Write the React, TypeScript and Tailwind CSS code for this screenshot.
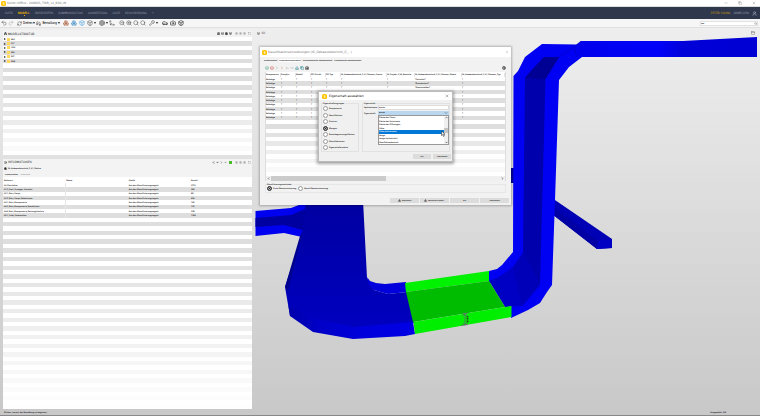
import { useState } from 'react';
import type { ReactNode } from 'react';
import {
  Aperture, Box, Boxes, Building2, Camera, Car, ChevronDown, ChevronLeft, ChevronRight, ChevronUp,
  Copy, Download, Footprints, Info, Layers, Minus, Move3d, Network, PanelTop, Redo2, RefreshCw, Search,
  Settings, Square, Undo2, UserRound, Wrench, X, ZoomIn, ZoomOut,
} from 'lucide-react';

/* ================= Data ================= */
const menu = ['DATEI', 'MODELL', 'ÜBERPRÜFEN', 'KOMMUNIKATION', 'AUSWERTUNG', 'CODE', 'BESCHREIBUNG', '+'];

const models = ['ARC', 'ELT', 'HZG', 'KÄL', 'RLT', 'SAN'];

const classes: [string, string][] = [
  ['00_Platzhalter', '2723'],
  ['01.2_Start_Erzeuger_Verteiler', '284'],
  ['02.1_Netz_Haupt', '88'],
  ['03.2_Netz_Haupt_Kabeltrasse', '656'],
  ['04.1_Netz_Komponente', '165'],
  ['04.2_Netz_Komponente_Brandschott', '125'],
  ['04.4_Netz_Komponente_Rettungsleuchte', '228'],
  ['05.1_Ende_Verbraucher', '1366'],
];

const ruleColumns = [
  { label: 'Komponente', width: 'w-[15px]' },
  { label: 'Disziplin', width: 'w-[15px]' },
  { label: 'Modell', width: 'w-[15px]' },
  { label: 'IFC-Entität', width: 'w-[15px]' },
  { label: 'IFC-Typ', width: 'w-[15px]' },
  { label: 'IG_Gebaeudetechnik_E_01_Element_Status', width: 'w-[46px]' },
  { label: 'IG_Projekt_E_06_Bauteile', width: 'w-[28px]' },
  { label: 'IG_Gebaeudetechnik_E_01_Element_Name', width: 'w-[47px]' },
  { label: 'IG_Gebaeudetechnik_F_01_Element_Typ', width: 'flex-1' },
];

const ruleNames = ['*Verteiler*', '*Brandschott*', '*Rauchmelder*'];

const groups = [
  'Komponente', 'Identifikation', 'Position', 'Mengen',
  'Raumbegrenzungsflächen', 'Klassifikationen', 'Eigenschaftensätze',
];

const properties = [
  'Fläche der Türen', 'Fläche der Unterseite', 'Fläche der Öffnungen', 'Höhe',
  'Höhe (einheitslos)', 'Länge', 'Länge (einheitslos)', 'Oberflächenbereich',
];

// stripes get lighter towards the end of a long list
function stripe(i: number, total: number) {
  if (i % 2 === 0) return '#ffffff';
  const start = Math.min(13, total / 2);
  const t = Math.max(0, (i - start) / (total - start));
  const v = Math.round(222 + 33 * t);
  return `rgb(${v},${v},${v})`;
}

const range = (n: number) => Array.from({ length: n }, (_, i) => i);

/* ================= Small parts ================= */
function Logo() {
  return (
    <svg className="size-[5px] shrink-0" viewBox="0 0 10 10" aria-hidden>
      <rect width="10" height="10" rx="3" fill="#ffc400" />
      <path d="M6.500 3.200 4 3.200v1.700h2.400v2H3.600" fill="none" stroke="#fff" strokeWidth="1.1" />
    </svg>
  );
}

function Tool({ label, children }: { label: string; children: ReactNode }) {
  return (
    <button aria-label={label} className="flex size-[6px] shrink-0 items-center justify-center text-[#4a4a4a] [&>svg]:size-[6px]">
      {children}
    </button>
  );
}

function Caret() {
  return (
    <svg className="h-[2px] w-[2px] shrink-0" viewBox="0 0 4 4" aria-hidden>
      <path d="M0 0h4L2 4z" fill="#222" />
    </svg>
  );
}

function PanelTools() {
  return (
    <div className="flex items-center gap-px text-[#777] [&>svg]:size-[3px]">
      <Settings />
      <Settings />
      <Settings />
      <Square className="ml-px" />
    </div>
  );
}

function PushButton({ children, className }: { children: ReactNode; className: string }) {
  return (
    <button className={`flex h-[5px] items-center justify-center gap-px bg-[#dcdcdc] text-[2px] leading-[3px] font-semibold text-[#111] ${className}`}>
      {children}
    </button>
  );
}

const radioClass =
  'size-[5px] shrink-0 appearance-none rounded-full border border-[#999] bg-white checked:border-[#444] checked:bg-black checked:shadow-[inset_0_0_0_1px_#bbb]';

/* ================= 3D view ================= */
function Scene() {
  return (
    <svg className="block h-full w-full" viewBox="253 28 507 381" preserveAspectRatio="xMinYMin slice" aria-label="3D">
      <defs>
        <linearGradient id="duct" x1="0" x2="1" y1="0" y2="0">
          <stop offset="0" stopColor="#0000ec" />
          <stop offset="0.45" stopColor="#0000fa" />
          <stop offset="0.6" stopColor="#0000d8" />
          <stop offset="1" stopColor="#0000d4" />
        </linearGradient>
        <linearGradient id="floor" x1="0" x2="0" y1="0" y2="1">
          <stop offset="0" stopColor="#0000a0" />
          <stop offset="1" stopColor="#0000c0" />
        </linearGradient>
        <linearGradient id="rim" x1="0" x2="1" y1="0" y2="0">
          <stop offset="0" stopColor="#0000ac" />
          <stop offset="0.25" stopColor="#0000c8" />
          <stop offset="0.6" stopColor="#0000dc" />
          <stop offset="1" stopColor="#0000e6" />
        </linearGradient>
      </defs>

      {/* branch behind the riser */}
      <path d="M508 168H515V183H508z" fill="#0000a0" />
      <path d="M552 198 612 239 612 248 597 249 552 214z" fill="#0000b4" />
      <path d="M552 206 598 241 597 249 552 214z" fill="#0000a4" />
      <path d="M598 241 612 239 612 248 597 249z" fill="#0000c4" />

      {/* riser */}
      <path
        d="M513 252 513.5 76 518 71 525 57 542 44 577 44.5 582 57 569 67 559 80 555 200 552 285 547 292 540 303 528 310 511 318 511 306 489 281 489 271 497 269 502 265z"
        fill="#0000f2"
      />
      <path d="M525 78 544 57 559 57 545.5 79 540 285 523 253z" fill="#0000ac" />
      <path d="M525 78 529 73 544 57 559 57 545.5 79z" fill="#000094" />
      <path d="M523 253 540 285 522 306 505 307 489 281 499 277 513 267z" fill="#0000c4" />
      <path d="M523 253 540 285 522 306 513 267z" fill="#0000b8" />
      <path d="M576 45 581 41 683 41 757 37 757 57 580 57z" fill="url(#duct)" />
      <path d="M581 41 574 47 559 57M574 47 577 57" fill="none" stroke="#0000a8" strokeWidth="0.5" />

      {/* main duct */}
      <path d="M255.500 211 291 208 312 200 320 215 302 237 284 233 255.500 236z" fill="#0000f0" />
      <path d="M255.500 218 291 215 312 206 320 215 302 230 284 225 255.500 227z" fill="#0000a0" />
      <path d="M306 200 363 200 367 278 374 290 388 294 407 292 414 323 353 328 290 316 285 287 302 234z" fill="url(#floor)" />
      <path d="M300 236 303 230 288 291 285 287z" fill="#00008e" />
      <path d="M367 277 370 281 376 283 385 284 406 282 407 292 388 294 374 290 369 285z" fill="#0000dc" />
      <path d="M288.500 306 317 319 353 327 413 322 415 334 405 336 353 339 313 332 290 316z" fill="url(#rim)" />

      {/* selected element */}
      <path d="M405 283 489 271 489 281 406 292z" fill="#00f200" />
      <path d="M406 292 489 281 505 307 413 322z" fill="#00bc00" />
      <path d="M413.500 322 511.500 306 511.500 317 415 334z" fill="#00ee00" />
      <path d="M462 314 468 313M465 314V325M461 325.500 468 324.500M463 316 465 314 467 316M463 323 465 325 467 323" fill="none" stroke="#6a5a78" strokeWidth="0.7" />
      <path d="M467.500 316V323" stroke="#264a26" strokeWidth="1.6" strokeDasharray="1.2 0.5" />
    </svg>
  );
}

/* ================= Side panels ================= */
function ModelTree() {
  return (
    <section className="flex min-h-0 flex-1 flex-col bg-[#f2f2f2]">
      <header className="flex h-[7px] shrink-0 items-center justify-between px-px">
        <h2 className="flex items-center gap-px font-['Roboto',sans-serif] text-[3px] leading-[4px] text-[#222]">
          <Network className="size-[3px]" strokeWidth={3} />
          MODELLSTRUKTUR
        </h2>
        <div className="flex items-center gap-px text-[#333] [&>svg]:size-[3px]">
          <Building2 strokeWidth={3} />
          <Layers strokeWidth={3} />
          <Boxes strokeWidth={3} />
          <Box strokeWidth={3} />
          <span className="w-px" />
          <PanelTools />
        </div>
      </header>
      <ul className="flex min-h-0 flex-1 flex-col">
        {range(27).map((i) => (
          <li key={i} className="flex min-h-0 flex-1 items-center gap-px pl-px" style={{ backgroundColor: stripe(i, 27) }}>
            {models[i] && (
              <>
                <svg className="size-[2px]" viewBox="0 0 4 4" aria-hidden>
                  <path d="M0 0 4 2 0 4z" fill="#333" />
                </svg>
                <span className="size-[3px] bg-[#ffd75a]" />
                <span className="text-[2px] leading-[3px] font-semibold text-[#111]">{models[i]}</span>
              </>
            )}
          </li>
        ))}
      </ul>
    </section>
  );
}

function InfoPanel() {
  return (
    <section className="flex min-h-0 flex-2 flex-col bg-[#f3f3f3]">
      <header className="flex h-[6px] shrink-0 items-center justify-between px-px">
        <h2 className="flex items-center gap-px font-['Roboto',sans-serif] text-[3px] leading-[4px] text-[#333]">
          <Info className="size-[3px]" strokeWidth={3} />
          INFORMATIONEN
        </h2>
        <div className="flex items-center gap-px text-[#222] [&>svg]:size-[3px]">
          <ChevronLeft strokeWidth={5} />
          <ChevronDown strokeWidth={5} />
          <ChevronRight strokeWidth={3} />
          <ChevronDown strokeWidth={3} />
          <span className="ml-px size-[3px] bg-[#4cb82c]" />
          <span className="w-px" />
          <PanelTools />
        </div>
      </header>
      <div className="flex h-[6px] shrink-0 items-center gap-px pl-px text-[2px] leading-[3px] font-semibold text-[#111]">
        <Boxes className="size-[3px]" />
        IG_Gebaeudetechnik_E_01_Elektro
      </div>
      <nav className="flex h-[6px] shrink-0 items-center gap-[2px] pl-[2px] text-[2px] leading-[3px]">
        <button className="font-semibold text-[#111]">Klassifikation</button>
        <button className="text-[#777]">Hyperlinks</button>
      </nav>
      <table className="flex min-h-0 flex-1 flex-col text-[2px] leading-[3px] font-semibold text-[#111]">
        <thead className="block">
          <tr className="flex h-[6px] items-center bg-white text-left">
            {['Referenz', 'Name', 'Quelle', 'Anzahl'].map((h) => (
              <th key={h} className="flex-1 pl-px font-semibold">{h}</th>
            ))}
          </tr>
        </thead>
        <tbody className="flex min-h-0 flex-1 flex-col">
          {range(52).map((i) => {
            const row = classes[i];
            return (
              <tr key={i} className="flex min-h-0 flex-1 items-center" style={{ backgroundColor: stripe(i, 52) }}>
                {row && (
                  <>
                    <td className="flex-1 pl-px">{row[0]}</td>
                    <td className="flex-1 self-stretch border-l border-[#e6e6e6]" />
                    <td className="flex-1 pl-px">Aus den Klassifizierungsregeln</td>
                    <td className="flex-1 pl-px">{row[1]}</td>
                  </>
                )}
              </tr>
            );
          })}
        </tbody>
      </table>
    </section>
  );
}

/* ================= Dialogs ================= */
function RulesDialog() {
  const [exact, setExact] = useState(true);
  const tabs = ['Einstellungen', 'Klassifizierungsregeln', 'Unklassifizierte Komponenten', 'Klassifizierte Komponenten'];

  return (
    <div role="dialog" aria-label="Klassifikationseinstellungen" className="absolute top-[47px] left-[260px] w-[251px] bg-[#f2f2f2] text-[2px] leading-[3px] font-semibold text-[#111] shadow-[0_0_2px_1px_rgba(0,0,0,0.25)]">
      <header className="flex h-[10px] items-center gap-px bg-white px-[2px]">
        <Logo />
        <h2 className="flex-1 font-['DejaVu_Sans',sans-serif] text-[3px] leading-[4px] font-normal text-[#777]">
          Klassifikationseinstellungen (IG_Gebaeudetechnik_E_...)
        </h2>
        <button aria-label="Schließen"><X className="size-[4px] text-[#aaa]" /></button>
      </header>

      <nav className="flex h-[7px] items-center gap-[2px] px-[4px]">
        {tabs.map((t, i) => (
          <button key={t} className={i === 1 ? 'bg-white' : ''}>{t}</button>
        ))}
      </nav>

      <div className="flex h-[8px] items-center gap-px px-[5px] text-[#555] [&>svg]:size-[4px]">
        <Layers className="text-[#3a9a78]" />
        <Layers className="text-[#d04a3a]" />
        <ChevronRight className="text-[#3a9a78]" />
        <ChevronRight className="text-[#d04a3a]" />
        <ChevronUp />
        <ChevronDown />
        <Download className="text-[#23828c]" strokeWidth={3} />
        <Copy className="text-[#23828c]" strokeWidth={3} />
        <Camera className="text-black" strokeWidth={3} />
        <span className="flex-1" />
        <Settings className="text-[#333]" strokeWidth={4} />
      </div>

      <div className="mx-[5px] border-x border-[#ddd] bg-white">
        <table className="block">
          <thead className="block">
            <tr className="flex h-[5px] items-center">
              {ruleColumns.map((c) => (
                <th key={c.label} className={`h-[4px] overflow-hidden border-r border-[#e2e2e2] text-left font-semibold whitespace-nowrap ${c.width}`}>
                  {c.label}
                </th>
              ))}
            </tr>
          </thead>
          <tbody className="flex h-[99px] flex-col">
            {range(23).map((i) => (
              <tr key={i} className="flex min-h-0 flex-1 items-center" style={{ backgroundColor: stripe(i, 23) }}>
                {i < 10 &&
                  ruleColumns.map((c, k) => (
                    <td key={c.label} className={`whitespace-nowrap ${c.width}`}>
                      {k === 0 ? 'Beliebige' : k === 7 && ruleNames[i] ? ruleNames[i] : '*'}
                    </td>
                  ))}
              </tr>
            ))}
          </tbody>
        </table>
        <div className="flex h-[5px] items-center justify-between bg-[#f0f0f0] px-px">
          <ChevronLeft className="size-[3px]" strokeWidth={4} />
          <div className="flex h-full flex-1 px-px">
            <div className="w-1/2 bg-[#cbcbcb]" />
          </div>
          <ChevronRight className="size-[3px]" strokeWidth={4} />
        </div>
      </div>

      <fieldset className="mx-[5px] mt-[2px] border border-[#e6e6e6] px-px pb-px">
        <legend>Klassifizierungsmethode</legend>
        <div className="flex h-[5px] items-center gap-[2px]">
          <label className="flex items-center gap-px">
            <input type="radio" name="method" checked={exact} onChange={() => setExact(true)} className={radioClass} />
            Erste Übereinstimmung
          </label>
          <label className="flex items-center gap-px">
            <input type="radio" name="method" checked={!exact} onChange={() => setExact(false)} className={radioClass} />
            Beste Übereinstimmung
          </label>
        </div>
      </fieldset>

      <div className="flex justify-end gap-px px-[2px] pt-[5px] pb-[2px]">
        <PushButton className="w-[29px]"><Download className="size-[3px]" strokeWidth={3} />Speichern</PushButton>
        <PushButton className="w-[29px]"><Download className="size-[3px]" strokeWidth={3} />Speichern unter...</PushButton>
        <PushButton className="w-[29px]">OK</PushButton>
        <PushButton className="w-[29px]">Abbrechen</PushButton>
      </div>
    </div>
  );
}

function PropertyDialog() {
  const [group, setGroup] = useState('Mengen');
  const [column, setColumn] = useState('Breite');

  return (
    <div role="dialog" aria-label="Eigenschaft auswählen" className="absolute top-[91px] left-[318px] w-[135px] border border-[#bbb] bg-[#f0f0f0] text-[2px] leading-[3px] font-semibold text-[#111] shadow-[0_1px_3px_1px_rgba(0,0,0,0.35)]">
      <header className="flex h-[8px] items-center gap-[2px] bg-white px-[3px]">
        <Logo />
        <h2 className="flex-1 font-['DejaVu_Sans',sans-serif] text-[3px] leading-[4px] font-normal text-black">Eigenschaft auswählen</h2>
        <button aria-label="Schließen"><X className="size-[4px] text-[#333]" /></button>
      </header>

      <div className="flex gap-[3px] px-[2px] pt-[2px]">
        <fieldset className="w-[38px] border border-[#e2e2e2] pb-px pl-px">
          <legend>Eigenschaftengruppe</legend>
          <div className="flex h-[45px] flex-col justify-between pt-px">
            {groups.map((g) => (
              <label key={g} className="flex h-[5px] items-center gap-px whitespace-nowrap">
                <input type="radio" name="group" checked={group === g} onChange={() => setGroup(g)} className={radioClass} />
                {g}
              </label>
            ))}
          </div>
        </fieldset>

        <fieldset className="min-w-0 flex-1 border border-[#e2e2e2] pl-px">
          <legend>Eigenschaft</legend>
          <div className="flex flex-col gap-px">
            <div className="flex items-center">
              <label htmlFor="column" className="w-[14px]">Spaltenname:</label>
              <input id="column" value={column} onChange={(e) => setColumn(e.target.value)} className="h-[5px] min-w-0 flex-1 border border-[#ddd] bg-white" />
            </div>
            <div className="flex items-center">
              <label htmlFor="property" className="w-[14px]">Eigenschaft:</label>
              <div className="relative flex min-w-0 flex-1">
                <select id="property" defaultValue="Breite" className="h-[4px] w-full appearance-none bg-[#b9d7ef] pl-px leading-[4px]">
                  <option>Breite</option>
                </select>
                <ChevronDown className="absolute top-0 right-px size-[4px]" />
                <div className="absolute inset-x-0 top-full flex border border-[#999] bg-white">
                  <ul role="listbox" aria-label="Eigenschaft" className="flex-1">
                    {properties.map((p, i) => (
                      <li key={p} role="option" aria-selected={i === 4} className={i % 2 ? 'h-[3px] leading-[3px]' : i === 4 ? 'h-[4px] bg-[#0078d7] leading-[4px] text-white' : 'h-[4px] leading-[4px]'}>
                        {p}
                      </li>
                    ))}
                  </ul>
                  <div className="flex w-[4px] flex-col items-center justify-between bg-[#f0f0f0]">
                    <ChevronUp className="size-[3px]" strokeWidth={4} />
                    <span className="h-[5px] w-full bg-[#c4c4c4]" />
                    <ChevronDown className="size-[3px]" strokeWidth={4} />
                  </div>
                  {/* pointer */}
                  <svg className="absolute top-[15px] right-[3px] h-[6px] w-[4px]" viewBox="0 0 8 12" aria-hidden>
                    <path d="M1 0v9l2-2 2 4 1.500-1L5 6.500h3z" fill="#fff" stroke="#111" strokeWidth="1" />
                  </svg>
                </div>
              </div>
            </div>
          </div>
        </fieldset>
      </div>

      <div className="flex justify-end gap-[2px] px-px pt-[2px] pb-[2px]">
        <PushButton className="w-[18px]">OK</PushButton>
        <PushButton className="w-[18px]">Abbrechen</PushButton>
      </div>
    </div>
  );
}

/* ================= App ================= */
export default function App() {
  return (
    <div className="relative flex h-screen flex-col overflow-hidden bg-linear-to-b from-[#f1f1f1] to-[#c8c8c8] font-['Noto_Sans',sans-serif] text-[3px] leading-[4px] [text-rendering:geometricPrecision]">
      <header className="flex h-[7px] shrink-0 items-center gap-px border-b border-[#ddd] bg-white px-px text-[#777]">
        <Logo />
        <span className="flex-1 font-['DejaVu_Sans',sans-serif]">Solibri Office - 200603_TWB_v1_600_IN</span>
        <div className="flex items-center gap-[10px] pr-[3px]">
          <Minus className="size-[4px]" />
          <Copy className="size-[4px]" />
          <X className="size-[4px]" />
        </div>
      </header>

      <nav className="flex h-[12px] shrink-0 items-center gap-[5px] bg-[#2f374d] pr-[3px] pl-[5px] font-['Roboto',sans-serif] text-[#8a90a0]">
        {menu.map((m) => (
          <a key={m} href="#" className={m === 'MODELL' ? 'relative font-semibold text-[#f2b900]' : ''}>
            {m}
            {m === 'MODELL' && <span className="absolute top-full left-1/2 size-px bg-[#f2b900]" />}
          </a>
        ))}
        <span className="flex-1" />
        <div className="flex items-center gap-[3px]">
          <span className="text-[#c79a10]">PETER YOUNG</span>
          <a href="#">ABMELDEN</a>
          <UserRound className="size-[5px] text-[#c8ccd6]" />
        </div>
      </nav>

      <div className="flex h-[9px] shrink-0 items-center gap-px border-b border-[#e0e0e0] bg-[#f6f6f6] pr-[2px] pl-px text-black">
        <Tool label="Rückgängig"><Undo2 /></Tool>
        <Tool label="Wiederholen"><Redo2 className="text-[#aaa]" /></Tool>
        <span className="w-px" />
        <button className="flex items-center gap-px font-['Roboto',sans-serif]">
          <RefreshCw className="size-[5px] text-[#444]" />
          Drehen
          <Caret />
        </button>
        <button className="flex items-center gap-px font-['Roboto',sans-serif]">
          <Footprints className="size-[5px] text-[#444]" />
          Bemaßung
          <Caret />
        </button>
        <span className="w-px" />
        <div className="flex gap-[2px]">
          <Tool label="Komponenten"><Boxes className="text-[#b0664a]" /></Tool>
          <Tool label="Auswahl"><Boxes className="text-[#4a94c8]" /></Tool>
          <Tool label="Korb"><Box className="text-[#3a98e0]" /></Tool>
          <Tool label="Ansicht"><Box /></Tool>
        </div>
        <Caret />
        <span className="w-px" />
        <Tool label="Transparenz"><Aperture /></Tool>
        <Caret />
        <Tool label="Verschieben"><Move3d /></Tool>
        <span className="w-[2px]" />
        <Tool label="Verkleinern"><ZoomOut /></Tool>
        <Tool label="Vergrößern"><ZoomIn /></Tool>
        <Tool label="Einpassen"><Search /></Tool>
        <Tool label="Lupe"><Search /></Tool>
        <span className="w-px" />
        <Tool label="Werkzeug"><Wrench /></Tool>
        <Caret />
        <span className="w-[2px]" />
        <div className="flex gap-[2px]">
          <Tool label="Sichtbarkeit"><Car strokeWidth={3} /></Tool>
          <Tool label="Kamera"><Camera strokeWidth={3} /></Tool>
          <Tool label="Quader"><Box strokeWidth={3} /></Tool>
        </div>
        <span className="flex-1" />
        <div className="flex h-[5px] w-[58px] items-center border border-[#e2e2e2] bg-white">
          <input aria-label="Suche" defaultValue="ma" className="h-[3px] min-w-0 flex-1 text-[2px] leading-[3px] font-semibold" />
          <Search className="size-[3px] text-[#555]" />
        </div>
      </div>

      <main className="flex min-h-0 flex-1">
        <aside className="flex w-1/3 shrink-0 flex-col gap-[4px] pt-[2px] pr-px pl-[3px]">
          <ModelTree />
          <InfoPanel />
        </aside>
        <section className="relative min-w-0 flex-1">
          <Scene />
          <div className="absolute inset-x-0 top-[3px] flex items-center justify-between pr-[5px] pl-[4px] text-[#555]">
            <h2 className="flex items-center gap-px">
              <Box className="size-[3px]" strokeWidth={3} />
              3D
            </h2>
            <PanelTop className="size-[4px]" />
          </div>
        </section>
      </main>

      <footer className="flex h-[7px] shrink-0 items-center justify-between border-b border-[#888] pr-[34px] pl-[4px] text-[2px] leading-[3px] font-semibold text-[#111]">
        <span>Klicken, um mit der Bemaßung zu beginnen</span>
        <span>Ausgewählt: 0/8</span>
      </footer>

      <RulesDialog />
      <PropertyDialog />
    </div>
  );
}
